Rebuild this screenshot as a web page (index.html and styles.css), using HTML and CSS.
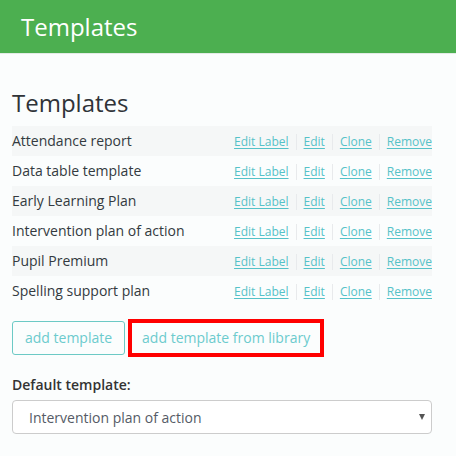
FILE: index.html
```html
<!DOCTYPE html>
<html lang="en">
<head>
<meta charset="utf-8">
<title>Templates</title>
<link rel="stylesheet" href="styles.css">
</head>
<body>
<header class="topbar">
  <h1 class="topbar-title">Templates</h1>
</header>
<main class="content">
  <h2 class="page-title">Templates</h2>
  <ul class="template-list">
    <li class="template-row">
      <span class="template-name">Attendance report</span>
      <span class="actions"><a href="#">Edit Label</a><a href="#">Edit</a><a href="#">Clone</a><a href="#">Remove</a></span>
    </li>
    <li class="template-row">
      <span class="template-name">Data table template</span>
      <span class="actions"><a href="#">Edit Label</a><a href="#">Edit</a><a href="#">Clone</a><a href="#">Remove</a></span>
    </li>
    <li class="template-row">
      <span class="template-name">Early Learning Plan</span>
      <span class="actions"><a href="#">Edit Label</a><a href="#">Edit</a><a href="#">Clone</a><a href="#">Remove</a></span>
    </li>
    <li class="template-row">
      <span class="template-name">Intervention plan of action</span>
      <span class="actions"><a href="#">Edit Label</a><a href="#">Edit</a><a href="#">Clone</a><a href="#">Remove</a></span>
    </li>
    <li class="template-row">
      <span class="template-name">Pupil Premium</span>
      <span class="actions"><a href="#">Edit Label</a><a href="#">Edit</a><a href="#">Clone</a><a href="#">Remove</a></span>
    </li>
    <li class="template-row">
      <span class="template-name">Spelling support plan</span>
      <span class="actions"><a href="#">Edit Label</a><a href="#">Edit</a><a href="#">Clone</a><a href="#">Remove</a></span>
    </li>
  </ul>
  <div class="button-row">
    <button class="btn btn-outline">add template</button>
    <button class="btn btn-highlight">add template from library</button>
  </div>
  <label class="field-label" for="default-template">Default template:</label>
  <div class="select-wrap">
    <select id="default-template" class="select">
      <option>Attendance report</option>
      <option>Data table template</option>
      <option>Early Learning Plan</option>
      <option selected>Intervention plan of action</option>
      <option>Pupil Premium</option>
      <option>Spelling support plan</option>
    </select>
  </div>
</main>
</body>
</html>
```

FILE: styles.css
```css
html, body {
  margin: 0;
  padding: 0;
}

body {
  background: #fbfdfd;
  font-family: "Open Sans", "Liberation Sans", sans-serif;
  color: #333333;
  font-size: 14px;
}

.topbar {
  background: #4caf50;
  height: 53px;
  border-bottom: 1px solid #e3ebe6;
  padding: 0 21px;
}

.topbar-title {
  margin: 0;
  font-size: 24px;
  font-weight: 400;
  line-height: 53px;
  color: #ffffff;
}

.content {
  padding: 0 24px 20px 12px;
}

.page-title {
  margin: 34px 0 8px;
  font-size: 24px;
  font-weight: 400;
  line-height: 30px;
  color: #2f3338;
}

.template-list {
  list-style: none;
  margin: 0;
  padding: 0;
}

.template-row {
  display: flex;
  justify-content: space-between;
  align-items: center;
  height: 30px;
  line-height: 30px;
}

.template-row:nth-child(odd) {
  background: #f5f7f7;
}

.template-name {
  color: #333a40;
}

.actions {
  display: flex;
  align-items: center;
  font-size: 12px;
  padding-top: 2px;
}

.actions a {
  color: #55c2c8;
  text-decoration: underline;
  text-underline-offset: 2px;
  padding: 0 7px;
  line-height: 16px;
}

.actions a + a {
  border-left: 1px solid #e8eaec;
}

.actions a:last-child {
  padding-right: 0;
}

.button-row {
  display: flex;
  align-items: center;
  gap: 3px;
  margin-top: 13px;
}

.btn {
  font-family: "Open Sans", "Liberation Sans", sans-serif;
  font-size: 14px;
  line-height: 20px;
  color: #6ccbcd;
  background: transparent;
  border-radius: 3px;
  cursor: pointer;
}

.btn-outline {
  border: 1px solid #6cc9c5;
  padding: 6px 12px;
}

.btn-highlight {
  border: 4px solid #ff0000;
  border-radius: 0;
  padding: 5px 10px;
}

.field-label {
  display: block;
  margin-top: 18px;
  font-weight: 600;
  line-height: 20px;
  color: #333333;
}

.select-wrap {
  position: relative;
  margin-top: 5px;
}

.select-wrap::after {
  content: "";
  position: absolute;
  right: 7px;
  top: 14px;
  border-left: 3.5px solid transparent;
  border-right: 3.5px solid transparent;
  border-top: 6px solid #555555;
}

.select {
  display: block;
  width: 100%;
  height: 34px;
  box-sizing: border-box;
  appearance: none;
  -webkit-appearance: none;
  background: #ffffff;
  border: 1px solid #cccccc;
  border-radius: 4px;
  padding: 0 24px 0 16px;
  font-family: "Open Sans", "Liberation Sans", sans-serif;
  font-size: 14px;
  color: #555b66;
}
```
